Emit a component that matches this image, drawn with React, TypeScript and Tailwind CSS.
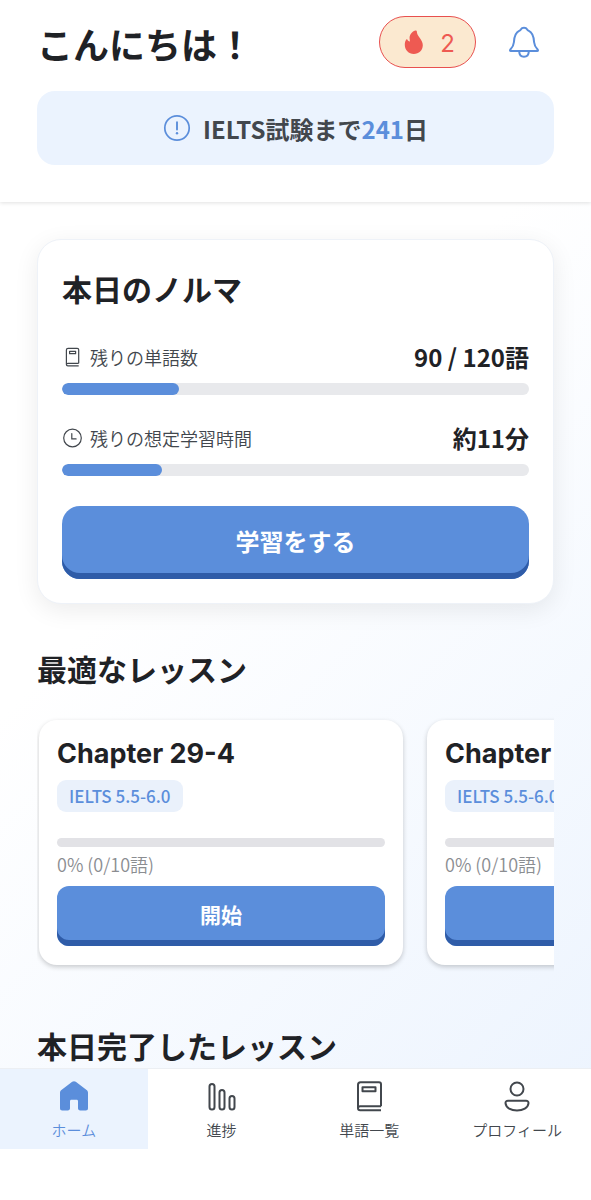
import React from 'react'

const lessons = [
  { id: 1, title: 'Chapter 29-4', level: 'IELTS 5.5-6.0', done: 0, total: 10 },
  { id: 2, title: 'Chapter 29-5', level: 'IELTS 5.5-6.0', done: 0, total: 10 },
]

const FlameIcon = () => (
  <svg className="h-6 w-5" viewBox="0 0 20 24" fill="currentColor" aria-hidden="true">
    <path d="M11.300 .6C7.500 2 5.400 5 5.600 8.500c0 1.200.3 2.200.4 3-1.500-.2-2.300-.9-2.700-2-.2-.4-.7-.4-1 0C1.100 11 .8 13 .8 15c0 5 3.800 8.900 9 8.900s9-3.700 9-8.700c0-3-1.300-5-3-7.300-1.700-2.200-3-4-3-6.600 0-.6-.6-1-1.500-.7z" />
  </svg>
)

const BellIcon = () => (
  <svg className="h-8 w-8" viewBox="0 0 32 32" fill="none" stroke="currentColor" strokeWidth="2" strokeLinejoin="round" aria-hidden="true">
    <path d="M2.700 25h26.600c.7 0 .9-.7.5-1.200-2.300-2.400-3.500-4.400-3.700-7.600-.3-5.300-1.300-9.600-5.600-11.500-.6-.3-1-.7-1.300-1.200C18.600 2.400 17.500 1.700 16 1.700s-2.600.7-3.200 1.800c-.3.5-.7.9-1.300 1.200-4.300 1.900-5.300 6.200-5.600 11.500-.2 3.200-1.400 5.200-3.700 7.600-.4.500-.2 1.200.5 1.200z" />
    <path d="M11.200 25.500c.1 3.200 1.900 5.200 4.800 5.200s4.700-2 4.800-5.200" />
  </svg>
)

const AlertIcon = () => (
  <svg className="h-7 w-7" viewBox="0 0 28 28" fill="none" stroke="currentColor" aria-hidden="true">
    <circle cx="14" cy="14" r="12.200" strokeWidth="1.700" />
    <path d="M14 8.300v7.200" strokeWidth="1.900" strokeLinecap="round" />
    <circle cx="14" cy="19.300" r="1.200" fill="currentColor" stroke="none" />
  </svg>
)

const BookIcon = () => (
  <svg className="h-8 w-8" viewBox="0 0 32 32" fill="none" stroke="currentColor" strokeWidth="2" strokeLinejoin="round" aria-hidden="true">
    <path d="M28 26.300V4.300c0-1.100-.9-2-2-2H7.500c-1.400 0-2.500 1.100-2.500 2.500V28" />
    <path d="M28 26.300H7.200c-1.200 0-2.200.8-2.200 2s1 2 2.200 2H28" />
    <rect x="9.500" y="7.200" width="13" height="4" />
  </svg>
)

const SmallBookIcon = () => (
  <svg className="h-5 w-5" viewBox="0 0 20 20" fill="none" stroke="currentColor" strokeWidth="1.200" strokeLinejoin="round" aria-hidden="true">
    <path d="M16.700 16.300V2.800c0-.9-.6-1.500-1.500-1.500H6.100c-1 0-1.700.7-1.700 1.700v14.300" />
    <path d="M16.700 16.300H5.900c-.9 0-1.500.4-1.500 1.200s.6 1.300 1.500 1.300h10.800" />
    <rect x="7.600" y="4.300" width="6" height="2.400" />
  </svg>
)

const ClockIcon = () => (
  <svg className="h-5 w-5" viewBox="0 0 20 20" fill="none" stroke="currentColor" strokeWidth="1.200" strokeLinecap="round" aria-hidden="true">
    <circle cx="10.500" cy="10" r="8.800" />
    <path d="M9.800 5.500v5.400h4.300" />
  </svg>
)

const HomeIcon = () => (
  <svg className="h-8 w-8" viewBox="0 0 32 32" fill="currentColor" aria-hidden="true">
    <path d="M14.200 1.800c1.100-.9 2.500-.9 3.600 0l10.800 8.300c.9.700 1.400 1.600 1.400 2.700v15.500c0 1.400-.9 2.200-2.200 2.200h-5.600c-1.300 0-2.200-.9-2.200-2.200v-7.100c0-1-.5-1.500-1.500-1.500h-5c-1 0-1.500.5-1.500 1.500v7.100c0 1.300-.9 2.200-2.200 2.200H4.200C2.900 30.500 2 29.700 2 28.300V12.800c0-1.100.5-2 1.400-2.700z" />
  </svg>
)

const ProgressIcon = () => (
  <svg className="h-8 w-8" viewBox="0 0 32 32" fill="none" stroke="currentColor" strokeWidth="2" aria-hidden="true">
    <rect x="3.500" y="4" width="5" height="25.500" rx="2.500" />
    <rect x="13.500" y="10" width="5" height="19.500" rx="2.500" />
    <rect x="23.500" y="16" width="5" height="13.500" rx="2.500" />
  </svg>
)

const ProfileIcon = () => (
  <svg className="h-8 w-8" viewBox="0 0 32 32" fill="none" stroke="currentColor" strokeWidth="2" strokeLinejoin="round" aria-hidden="true">
    <circle cx="16" cy="9" r="6.500" />
    <path d="M7 20.700h18c1.600 0 2.600 1 2.500 2.500-.4 4.600-5.600 7.300-11.500 7.300S4.900 27.800 4.500 23.200c-.1-1.500.9-2.500 2.500-2.500z" />
  </svg>
)

const Quota = ({ icon, label, value, percent }: { icon: React.ReactNode; label: string; value: string; percent: number }) => (
  <div>
    <div className="flex h-9 items-center justify-between">
      <div className="flex items-center gap-2 text-lg font-[350] text-[#42474d]">
        {icon}
        <span>{label}</span>
      </div>
      <span className="text-2xl font-bold text-[#1f2226]">{value}</span>
    </div>
    <div className="mt-2 h-3 overflow-hidden rounded-full bg-[#e8e9ec]">
      <div className="h-full rounded-full bg-[#5b8edb]" style={{ width: `${percent}%` }} />
    </div>
  </div>
)

const LessonCard = ({ lesson }: { lesson: (typeof lessons)[number] }) => (
  <article className="w-[364px] shrink-0 rounded-[18px] bg-white px-[18px] pt-4 pb-[19px] shadow-[0_2px_5px_rgba(0,0,0,0.2)]">
    <h3 className="font-['Inter','Noto_Sans_CJK_JP',sans-serif] text-[27px] leading-9 font-bold">{lesson.title}</h3>
    <span className="mt-2 inline-flex h-8 items-center rounded-[9px] bg-[#eaf1fb] px-3 text-[17px] font-medium text-[#5b8edb]">{lesson.level}</span>
    <div className="mt-[26px] h-[9px] overflow-hidden rounded-full bg-[#e2e2e6]">
      <div className="h-full bg-[#5b8edb]" style={{ width: `${(lesson.done / lesson.total) * 100}%` }} />
    </div>
    <p className="mt-[3px] text-lg leading-7 font-[350] text-[#8b8d91]">
      {(lesson.done / lesson.total) * 100}% ({lesson.done}/{lesson.total}語)
    </p>
    <button className="mt-2 h-[60px] w-full rounded-xl bg-[#5b8edb] pb-[3px] text-[21px] font-bold text-white shadow-[inset_0_-6px_0_#2f5ca8]">開始</button>
  </article>
)

const navItems = [
  { label: 'ホーム', icon: <HomeIcon />, active: true },
  { label: '進捗', icon: <ProgressIcon />, active: false },
  { label: '単語一覧', icon: <BookIcon />, active: false },
  { label: 'プロフィール', icon: <ProfileIcon />, active: false },
]

const App = () => {
  return (
    <div className="flex h-screen flex-col bg-linear-135 from-white from-40% to-[#ebf3fe] font-['Noto_Sans_CJK_JP',sans-serif] text-[#1f2226]">
      <header className="z-10 shrink-0 bg-white px-[37px] pt-4 pb-[37px] shadow-[0_1px_4px_rgba(0,0,0,0.12)]">
        <div className="flex items-center justify-between">
          <h1 className="pt-[2px] text-4xl font-bold">こんにちは！</h1>
          <div className="flex items-center gap-8 pr-[14px]">
            <div className="flex h-[52px] w-[97px] items-center justify-center gap-4 rounded-full border border-[#e8504f] bg-[#fbe9d0] pl-1 text-[#ee5a52]">
              <FlameIcon />
              <span className="pt-1 font-['Inter',sans-serif] text-2xl">2</span>
            </div>
            <button aria-label="通知" className="text-[#5b8edb]">
              <BellIcon />
            </button>
          </div>
        </div>

        {/* Exam countdown */}
        <div className="mt-[23px] flex h-[74px] items-center justify-center gap-3 rounded-[18px] bg-[#ebf3fe]">
          <span className="text-[#5b8edb]"><AlertIcon /></span>
          <p className="pt-[2px] text-2xl font-bold text-[#42474d]">
            IELTS試験まで<span className="text-[#5b8edb]">241</span>日
          </p>
        </div>
      </header>

      <main className="min-h-0 flex-1 overflow-y-auto px-[37px] pt-[37px] [scrollbar-width:none]">
        {/* Daily quota */}
        <section className="rounded-3xl border border-[#eef2f8] bg-white p-6 shadow-[0_6px_24px_rgba(0,0,0,0.08)]">
          <h2 className="text-3xl leading-[48px] font-bold">本日のノルマ</h2>
          <div className="mt-[27px] flex flex-col gap-[25px]">
            <Quota icon={<SmallBookIcon />} label="残りの単語数" value="90 / 120語" percent={25} />
            <Quota icon={<ClockIcon />} label="残りの想定学習時間" value="約11分" percent={21.5} />
          </div>
          <button className="mt-[30px] h-[73px] w-full rounded-[18px] bg-[#5b8edb] pb-1 text-2xl font-bold text-white shadow-[inset_0_-6px_0_#2f5ca8]">学習をする</button>
        </section>

        {/* Recommended lessons */}
        <section className="mt-[41px]">
          <h2 className="text-3xl leading-[46px] font-bold">最適なレッスン</h2>
          <div className="mt-[21px] flex gap-6 overflow-x-auto px-[2px] pt-2 pb-4 [scrollbar-width:none]">
            {lessons.map((lesson) => (
              <LessonCard key={lesson.id} lesson={lesson} />
            ))}
          </div>
        </section>

        <section className="mt-[41px]">
          <h2 className="text-3xl leading-[46px] font-bold">本日完了したレッスン</h2>
        </section>
      </main>

      <nav className="grid shrink-0 grid-cols-4 border-t border-[#eceff3] bg-white pb-[51px]">
        {navItems.map((item) => (
          <a
            key={item.label}
            href="#"
            className={item.active ? 'flex h-20 flex-col items-center bg-[#ebf3fe] pt-[11px] text-[#5b8edb]' : 'flex h-20 flex-col items-center pt-[11px] text-[#42474d]'}
          >
            {item.icon}
            <span className="mt-2 text-[15px] leading-5 font-[350]">{item.label}</span>
          </a>
        ))}
      </nav>
    </div>
  )
}

export default App
